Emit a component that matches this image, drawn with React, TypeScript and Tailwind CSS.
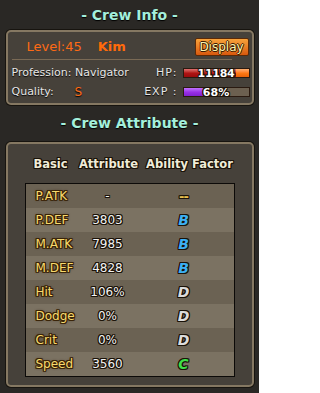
import React from 'react';

const outline =
  '[text-shadow:-1px_0_#1a1208,1px_0_#1a1208,0_-1px_#1a1208,0_1px_#1a1208,-1px_-1px_#1a1208,1px_1px_#1a1208,-1px_1px_#1a1208,1px_-1px_#1a1208]';

const brownOutline =
  '[text-shadow:-1px_0_#3a2408,1px_0_#3a2408,0_-1px_#3a2408,0_1px_#3a2408,1px_1px_#3a2408,-1px_-1px_#3a2408,-1px_1px_#3a2408,1px_-1px_#3a2408,0_0_3px_#2a1804]';

interface Attr {
  name: string;
  value: string;
  grade: string;
}

const attrs: Attr[] = [
  { name: 'P.ATK', value: '-', grade: '--' },
  { name: 'P.DEF', value: '3803', grade: 'B' },
  { name: 'M.ATK', value: '7985', grade: 'B' },
  { name: 'M.DEF', value: '4828', grade: 'B' },
  { name: 'Hit', value: '106%', grade: 'D' },
  { name: 'Dodge', value: '0%', grade: 'D' },
  { name: 'Crit', value: '0%', grade: 'D' },
  { name: 'Speed', value: '3560', grade: 'C' },
];

function Grade({ grade }: { grade: string }) {
  if (grade === '--') {
    return <span className={`text-[13px] font-bold text-[#e8c050] tracking-[-1px] ${outline}`}>--</span>;
  }
  const color =
    grade === 'B' ? 'text-[#3cb0f4]' : grade === 'C' ? 'text-[#3ee04a]' : 'text-[#dcdcdc]';
  return <span className={`text-[14px] font-bold italic ${color} ${outline}`}>{grade}</span>;
}

function Title({ children }: { children: React.ReactNode }) {
  return (
    <div className="text-[14px] font-bold text-[#a4f0dc] [text-shadow:0_1px_1px_#000]">
      - {children} -
    </div>
  );
}

export default function App() {
  return (
    <div className="w-[259px] h-[393px] bg-[#2a2825] flex flex-col items-center font-['DejaVu_Sans',sans-serif] text-[#e6e6e6] overflow-hidden">
      {/* Crew Info title */}
      <div className="h-[30px] flex items-center justify-center">
        <Title>Crew Info</Title>
      </div>

      {/* Info panel */}
      <div className="w-[248px] h-[75px] rounded-[5px] border-2 border-[#857862] bg-[#46413a] shadow-[0_0_0_1px_#17140f] flex flex-col">
        <div className="mt-[6px] h-[18px] flex items-center">
          <span className="ml-[19px] text-[13px] text-[#ff6a14]">Level:45</span>
          <span className="ml-[16px] text-[13px] font-bold text-[#ff6a0a]">Kim</span>
          <button className="ml-auto mr-[3px] w-[54px] h-[18px] rounded-[2px] border border-[#5a2a08] bg-gradient-to-b from-[#f7a23a] to-[#d8580c] text-[12px] leading-none text-[#fff7b0] [text-shadow:-1px_0_#3a1a04,1px_0_#3a1a04,0_-1px_#3a1a04,0_1px_#3a1a04]">
            Display
          </button>
        </div>
        <div className="mt-[3px] ml-[4px] w-[220px] h-px bg-[#7a6a55]" />
        <div className="mt-[6px] h-[14px] flex items-center text-[11px] [text-shadow:0_1px_1px_#000]">
          <span className="ml-[4px] w-[130px]">Profession: Navigator</span>
          <span className="w-[36px] text-right tracking-[1px]">HP:</span>
          <div className="ml-[5px] w-[67px] h-[10px] border border-[#2a1a10] flex relative">
            <div className="w-[52px] h-full bg-gradient-to-b from-[#e07070] via-[#b01414] to-[#9a0c0c]" />
            <div className="flex-1 h-full bg-gradient-to-b from-[#ffb070] via-[#ff7a14] to-[#e86008]" />
            <span className={`absolute inset-0 flex items-center justify-center text-[11px] font-bold text-white leading-none tracking-[-0.3px] ${outline}`}>
              11184
            </span>
          </div>
        </div>
        <div className="mt-[5px] h-[14px] flex items-center text-[11px] [text-shadow:0_1px_1px_#000]">
          <span className="ml-[4px] w-[63px]">Quality:</span>
          <span className="w-[67px] text-[12px] text-[#ff6a14]">S</span>
          <span className="w-[36px] text-right tracking-[1px]">EXP :</span>
          <div className="ml-[5px] w-[67px] h-[10px] border border-[#2a1a10] flex relative bg-[#6c6050]">
            <div className="w-[23px] h-full bg-gradient-to-b from-[#c070ff] via-[#9a30e8] to-[#8020d0]" />
            <span className={`absolute inset-0 flex items-center justify-center text-[11px] font-bold text-white leading-none ${outline}`}>
              68%
            </span>
          </div>
        </div>
      </div>

      {/* Crew Attribute title */}
      <div className="h-[37px] flex items-center justify-center">
        <Title>Crew Attribute</Title>
      </div>

      {/* Attribute panel */}
      <div className="w-[248px] h-[245px] rounded-[5px] border-2 border-[#857862] bg-[#46413a] shadow-[0_0_0_1px_#17140f] flex flex-col">
        <div className={`mt-[14px] h-[14px] flex items-center text-[11.5px] font-bold text-[#f0ecd8] ${outline}`}>
          <span className="ml-[17px] w-[52px] text-center">Basic</span>
          <span className="w-[64px] text-center">Attribute</span>
          <span className="w-[98px] text-center">Ability Factor</span>
        </div>
        <div className="mt-[11px] ml-[17px] w-[210px] border border-[#0c0a08] flex flex-col">
          {attrs.map((a, i) => (
            <div
              key={a.name}
              className={`h-[24px] flex items-center ${i % 2 === 0 ? 'bg-[#6b6253]' : 'bg-[#7b7262]'}`}
            >
              <span className={`w-[56px] pl-[10px] text-[12px] text-[#f8da6e] ${brownOutline}`}>
                {a.name}
              </span>
              <span className={`w-[52px] text-center text-[12px] text-[#f2f2f2] ${outline}`}>{a.value}</span>
              <span className="flex-1 text-center">
                <Grade grade={a.grade} />
              </span>
            </div>
          ))}
        </div>
      </div>
    </div>
  );
}
